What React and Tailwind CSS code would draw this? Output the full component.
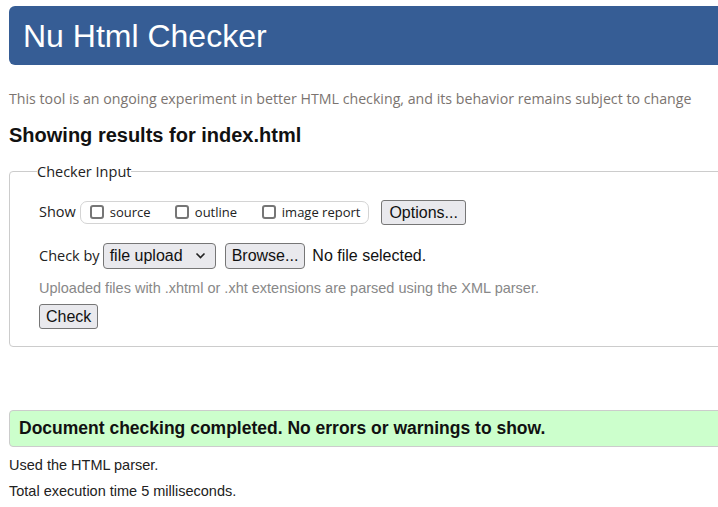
const Box = () => (
  <span className="inline-block w-[14px] h-[14px] border-2 border-[#767676] rounded-[3px] bg-white mr-[6px]" />
);

export default function App() {
  return (
    <div className="w-[718px] h-[507px] overflow-hidden bg-white font-['Liberation_Sans',Arial,sans-serif]">
      <div className="w-[760px] pl-[9px] pt-[6px]">
        <div className="h-[59px] bg-[#365d95] rounded-l-[6px] flex items-center pl-[14px]">
          <h1 className="text-white text-[32px] leading-none">Nu Html Checker</h1>
        </div>
        <p className="mt-[25px] text-[14.2px] text-[#7b7470] leading-[18px] font-['Segoe_UI','Open_Sans',sans-serif]">
          This tool is an ongoing experiment in better HTML checking, and its behavior remains subject to change
        </p>
        <h2 className="mt-[16px] text-[20px] font-bold text-[#111] leading-[22px]">
          Showing results for index.html
        </h2>
        <fieldset className="mt-[15px] border border-[#cccccc] rounded-l-[4px] pl-[29px] pr-0 pb-[17px] pt-0">
          <legend className="ml-[-2px] text-[14.5px] text-[#222] font-['Segoe_UI','Open_Sans',sans-serif]">Checker Input</legend>
          <div className="flex items-center mt-[17px] font-['Segoe_UI','Open_Sans',sans-serif]">
            <span className="text-[14.5px] text-[#222] mr-[4px]">Show</span>
            <div className="flex items-center h-[23px] border border-[#d4d4d4] rounded-[7px] pl-[9px] pr-[8px] text-[13px] text-[#222]">
              <label className="flex items-center w-[85px]"><Box />source</label>
              <label className="flex items-center w-[87px]"><Box />outline</label>
              <label className="flex items-center"><Box />image report</label>
            </div>
            <button className="ml-[12px] h-[25px] px-[7px] border border-[#767676] rounded-[3px] bg-[#e9e9ed] text-[16px] text-[#111] font-['Liberation_Sans',Arial,sans-serif]">Options...</button>
          </div>
          <div className="flex items-center mt-[18px]">
            <span className="text-[14.5px] text-[#222] mr-[3px] font-['Segoe_UI','Open_Sans',sans-serif]">Check by</span>
            <div className="h-[26px] w-[113px] border border-[#767676] rounded-[4px] bg-[#e9e9ed] flex items-center pl-[6px] text-[16px] text-[#111]">
              <span>file upload</span>
              <svg className="ml-[12px]" width="11" height="7" viewBox="0 0 11 7"><path d="M1.5 1.5 L5.5 5.5 L9.5 1.5" fill="none" stroke="#222" strokeWidth="1.6" /></svg>
            </div>
            <button className="ml-[9px] h-[26px] px-[6px] border border-[#767676] rounded-[4px] bg-[#e9e9ed] text-[16px] text-[#111]">Browse...</button>
            <span className="ml-[7px] text-[16px] text-[#111]">No file selected.</span>
          </div>
          <p className="mt-[10px] text-[14.5px] text-[#888] leading-[18px]">
            Uploaded files with .xhtml or .xht extensions are parsed using the XML parser.
          </p>
          <button className="mt-[7px] h-[25px] px-[6px] border border-[#767676] rounded-[3px] bg-[#e9e9ed] text-[16px] text-[#111]">Check</button>
        </fieldset>
        <div className="mt-[63px] h-[37px] bg-[#ccffcc] border border-[#cccccc] rounded-l-[4px] flex items-center pl-[9px]">
          <span className="text-[17.5px] font-bold text-[#111]">Document checking completed. No errors or warnings to show.</span>
        </div>
        <p className="mt-[10px] text-[14.5px] text-[#222] leading-[16px]">Used the HTML parser.</p>
        <p className="mt-[10px] text-[14.5px] text-[#222] leading-[16px]">Total execution time 5 milliseconds.</p>
      </div>
    </div>
  );
}
